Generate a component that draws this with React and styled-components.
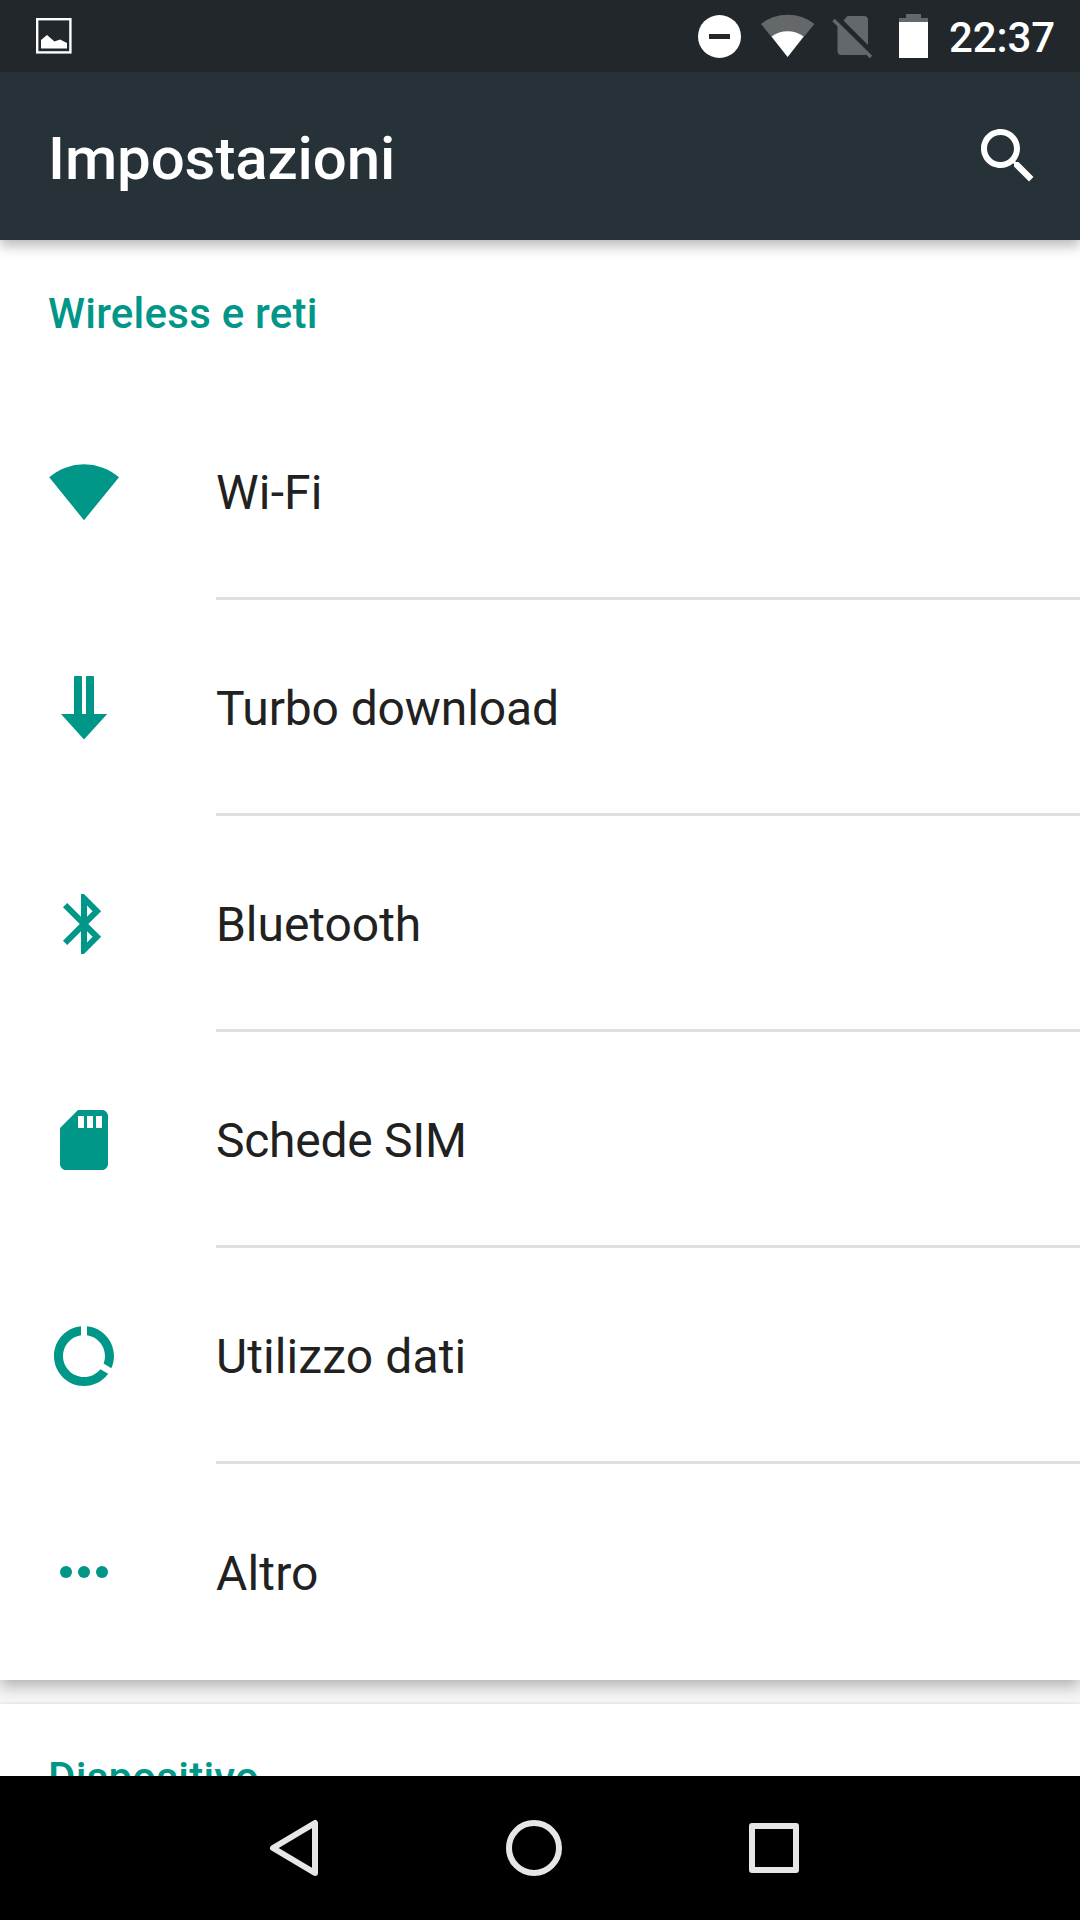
import React from "react";
import styled, { createGlobalStyle } from "styled-components";

const GlobalStyle = createGlobalStyle`
  * { box-sizing: border-box; }
  html, body { margin: 0; padding: 0; overflow: hidden; }
  body { font-family: Roboto, "Noto Sans", sans-serif; background: #fff; }
`;

const Screen = styled.div`
  display: flex;
  flex-direction: column;
  width: 1080px;
  height: 1920px;
  overflow: hidden;
  background: #f5f5f5;
`;

const StatusBar = styled.header`
  display: flex;
  flex: none;
  align-items: center;
  justify-content: space-between;
  height: 72px;
  padding: 0 25px 0 36px;
  background: #21272b;
`;

const StatusIcons = styled.div`
  display: flex;
  align-items: center;
  height: 72px;
`;

const StatusGlyph = styled.svg`
  display: block;
  width: ${(p) => p.$w}px;
  height: 72px;
  margin-right: ${(p) => p.$gap || 0}px;
`;

const Clock = styled.time`
  width: 106px;
  padding-top: 3px;
  font-size: 42px;
  font-weight: 500;
  line-height: 72px;
  letter-spacing: -0.1px;
  color: #fff;
`;

const Toolbar = styled.div`
  display: flex;
  flex: none;
  align-items: center;
  justify-content: space-between;
  height: 168px;
  padding: 0 36px 0 48px;
  background: #263238;
  box-shadow: 0 6px 12px rgba(0, 0, 0, 0.28);
  clip-path: inset(0 0 -30px 0);
  z-index: 1;
`;

const Title = styled.h1`
  margin: 6px 0 0;
  font-size: 60px;
  font-weight: 500;
  line-height: 72px;
  letter-spacing: -0.1px;
  color: #fff;
`;

const Icon = styled.svg`
  display: block;
  width: 72px;
  height: 72px;
  fill: ${(p) => p.$color || "#009688"};
`;

const Content = styled.main`
  display: flex;
  flex-direction: column;
  flex: none;
  gap: 24px;
  height: 1536px;
  overflow: hidden;
`;

const Card = styled.section`
  flex: none;
  background: #fff;
  box-shadow: 0 6px 14px rgba(0, 0, 0, 0.28);
  clip-path: inset(-2px 0 -24px 0);
`;

const SectionTitle = styled.h2`
  height: 144px;
  margin: 0;
  padding: 49px 48px 0;
  font-size: 42px;
  font-weight: 500;
  line-height: 50px;
  letter-spacing: 0.24px;
  color: #009688;
`;

const Row = styled.div`
  display: grid;
  grid-template-columns: 168px 1fr;
  align-items: center;
  height: 216px;
  padding-left: 48px;
`;

const Label = styled.div`
  height: 216px;
  border-bottom: ${(p) => (p.$last ? 0 : 3)}px solid #e0e0e0;
  padding-top: ${(p) => (p.$last ? 1 : 0)}px;
  font-size: 48px;
  line-height: 217px;
  letter-spacing: ${(p) => p.$tracking}px;
  color: #212121;
`;

const NavBar = styled.nav`
  display: flex;
  flex: none;
  justify-content: center;
  align-items: center;
  gap: 144px;
  height: 144px;
  padding-right: 12px;
  background: #000;
`;

const NavIcon = styled.svg`
  display: block;
  width: 96px;
  height: 144px;
  fill: none;
  stroke: #e6e6e6;
  stroke-width: 6;
  stroke-linejoin: round;
`;

const items = [
  {
    label: "Wi-Fi",
    tracking: 0.2,
    viewBox: "0 0 72 72",
    shape: <path d="M1.2 21.3A53.5 53.5 0 0 1 71 21.3L36 64.2Z" />,
  },
  {
    label: "Turbo download",
    tracking: -0.12,
    viewBox: "0 0 72 72",
    shape: (
      <>
        <rect x="26" y="4" width="8" height="40" rx="1" />
        <rect x="38" y="4" width="8" height="40" rx="1" />
        <path d="M13 42H59.2L36 67.4Z" />
      </>
    ),
  },
  {
    label: "Bluetooth",
    tracking: -0.05,
    viewBox: "0 0 24 24",
    shape: (
      <path d="M17.71 7.71L12 2h-1v7.59L6.41 5 5 6.41 10.59 12 5 17.59 6.41 19 11 14.41V22h1l5.71-5.71-4.3-4.29 4.3-4.29zM13 5.83l1.88 1.88L13 9.59V5.83zm1.88 10.46L13 18.17v-3.76l1.88 1.88z" />
    ),
  },
  {
    label: "Schede SIM",
    tracking: -0.28,
    viewBox: "0 0 24 24",
    shape: (
      <path d="M18 2h-8L4.02 8 4 20c0 1.1.9 2 2 2h12c1.1 0 2-.9 2-2V4c0-1.1-.9-2-2-2zm-6 6h-2V4h2v4zm3 0h-2V4h2v4zm3 0h-2V4h2v4z" />
    ),
  },
  {
    label: "Utilizzo dati",
    tracking: 0.1,
    viewBox: "0 0 24 24",
    shape: (
      <path d="M13 2.05v3.03c3.39.49 6 3.39 6 6.92 0 .9-.18 1.75-.48 2.54l2.6 1.53c.56-1.24.88-2.62.88-4.07 0-5.18-3.95-9.45-9-9.95zM12 19c-3.87 0-7-3.13-7-7 0-3.53 2.61-6.43 6-6.92V2.05c-5.06.5-9 4.76-9 9.95 0 5.52 4.47 10 9.99 10 3.31 0 6.24-1.61 8.06-4.09l-2.6-1.53C16.17 17.98 14.21 19 12 19z" />
    ),
  },
  {
    label: "Altro",
    tracking: 0.15,
    viewBox: "0 0 24 24",
    shape: (
      <>
        <circle cx="6" cy="12" r="2" />
        <circle cx="12" cy="12" r="2" />
        <circle cx="18" cy="12" r="2" />
      </>
    ),
  },
];

export default function App() {
  return (
    <>
      <GlobalStyle />
      <Screen>
        <StatusBar>
          <StatusGlyph $w={36} viewBox="36 0 36 72">
            <rect x="37.2" y="19.2" width="33.2" height="33.2" fill="none" stroke="#fff" strokeWidth="2.4" />
            <path fill="#fff" d="M41 40L47 35L54.5 41.5L60 39.5L67 43V48.5H41Z" />
          </StatusGlyph>
          <StatusIcons>
            <StatusGlyph $w={44} $gap={19} viewBox="698 0 44 72">
              <circle cx="719.5" cy="36.5" r="21.5" fill="#fff" />
              <rect x="709" y="34" width="21" height="5" fill="#21272b" />
            </StatusGlyph>
            <StatusGlyph $w={54} $gap={17} viewBox="761 0 54 72">
              <path fill="#64686b" d="M761 24A43 43 0 0 1 814.4 24L787.6 57Z" />
              <path fill="#fff" d="M771.6 36.5A27 27 0 0 1 803.6 36.5L787.6 57Z" />
            </StatusGlyph>
            <StatusGlyph $w={41} $gap={26} viewBox="832 0 41 72">
              <path
                fill="#64686b"
                d="M847.5 16H864Q868 16 868 20V45L843.5 20.5ZM837.5 24.5L867 54Q865.5 55 864 55H841.5Q837.5 55 837.5 51Z"
              />
              <path stroke="#64686b" strokeWidth="3.4" d="M833.5 20L871 57" />
            </StatusGlyph>
            <StatusGlyph $w={29} $gap={21} viewBox="899 0 29 72">
              <path fill="#64686b" d="M906 14H921V18H928V22H899V18H906Z" />
              <rect x="899" y="22" width="29" height="36" fill="#fff" />
            </StatusGlyph>
            <Clock>22:37</Clock>
          </StatusIcons>
        </StatusBar>
        <Toolbar>
          <Title>Impostazioni</Title>
          <Icon viewBox="0 0 24 24" $color="#fff">
            <path d="M15.5 14h-.79l-.28-.27C15.41 12.59 16 11.11 16 9.5 16 5.91 13.09 3 9.5 3S3 5.91 3 9.5 5.91 16 9.5 16c1.61 0 3.09-.59 4.23-1.57l.27.28v.79l5 4.99L20.49 19l-4.99-5zm-6 0C7.01 14 5 11.99 5 9.5S7.01 5 9.5 5 14 7.01 14 9.5 11.99 14 9.5 14z" />
          </Icon>
        </Toolbar>
        <Content>
          <Card>
            <SectionTitle>Wireless e reti</SectionTitle>
            {items.map((item, i) => (
              <Row key={item.label}>
                <Icon viewBox={item.viewBox}>{item.shape}</Icon>
                <Label $tracking={item.tracking} $last={i === items.length - 1}>
                  {item.label}
                </Label>
              </Row>
            ))}
          </Card>
          <Card>
            <SectionTitle>Dispositivo</SectionTitle>
          </Card>
        </Content>
        <NavBar>
          <NavIcon viewBox="246 1776 96 144">
            <path d="M315 1823V1873L273 1848Z" />
          </NavIcon>
          <NavIcon viewBox="486 1776 96 144">
            <circle cx="534" cy="1848" r="25" />
          </NavIcon>
          <NavIcon viewBox="726 1776 96 144">
            <rect x="752" y="1826" width="44" height="44" />
          </NavIcon>
        </NavBar>
      </Screen>
    </>
  );
}
